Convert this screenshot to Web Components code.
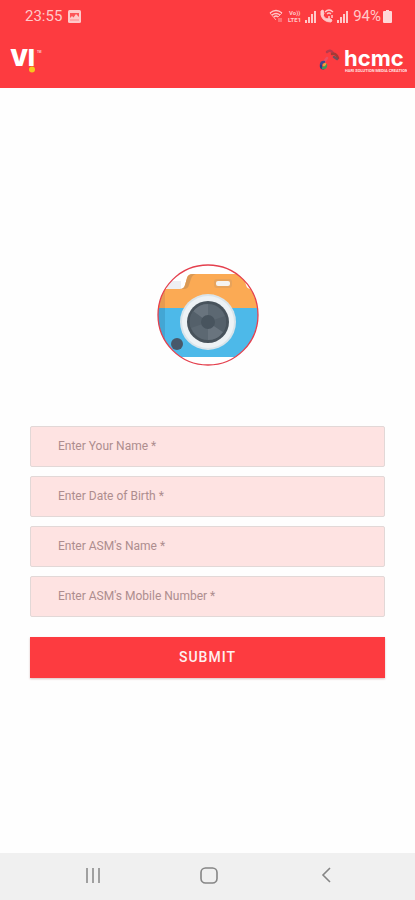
<!DOCTYPE html>
<html lang="en">
<head>
<meta charset="utf-8">
<meta name="viewport" content="width=device-width, initial-scale=1">
<title>Registration</title>
<style>
  html, body { height: 100%; margin: 0; }
  body { font-family: Roboto, "Liberation Sans", sans-serif; background: #fefefe; }
</style>
</head>
<body>
<profile-screen></profile-screen>
<script>
const define = (name, html, setup) => customElements.define(name, class extends HTMLElement {
  connectedCallback() {
    if (this.shadowRoot) return;
    const t = document.createElement('template');
    t.innerHTML = html;
    this.attachShadow({ mode: 'open' }).append(t.content.cloneNode(true));
    if (setup) setup(this, this.shadowRoot);
  }
});

define('status-bar', `
<style>
  :host { display: flex; align-items: center; justify-content: space-between; height: 32px; padding: 0 23px 0 25px; color: #ffc9c9; font-size: 15px; line-height: 16px; }
  div { display: flex; align-items: center; }
  .left { gap: 6px; }
  .right { gap: 2px; }
  .right span { padding-left: 2px; }
  svg { display: block; }
</style>
<div class="left"><span>23:55</span>
  <svg width="13" height="13" viewBox="0 0 13 13" aria-hidden="true"><rect width="13" height="13" rx="1.5" fill="#ffc9c9"/><path d="M2 3h9v4L8 4 5.500 7.500 4 6 2 8z" fill="#fd5558"/><path d="M2 10h9" stroke="#ff8a8c"/></svg>
</div>
<div class="right">
  <svg width="16" height="14" viewBox="0 0 16 14" fill="none" stroke="#ffc9c9" aria-hidden="true"><path d="M1 4Q7 -1 13 4M3 6Q7 3 11 6M5 8Q7 6 9 8" stroke-width="1.300"/><path d="M1 4l6 7M13 4L9 8" stroke-width=".8"/><path d="M10 9v4M12 13V9" stroke-width="1.200" opacity=".6"/></svg>
  <svg width="16" height="16" viewBox="0 0 16 16" fill="#ffc9c9" font-family="Roboto, sans-serif" font-weight="700" font-size="6"><text x="2" y="7">Vo))</text><text x="1" y="14">LTE1</text></svg>
  <svg width="12" height="13" viewBox="0 0 12 13" fill="#ffc9c9" aria-hidden="true"><path d="M0 10h2v3H0zM3 7h2v6H3zM6 4h2v9H6zM9 1h2v12H9z"/></svg>
  <svg width="16" height="14" viewBox="0 0 16 14" fill="none" stroke="#ffc9c9" aria-hidden="true"><path d="M2 2l2-1 1 4-1 1q1 3 4 4l2-1 3 2-1 2Q4 13 2 6z" fill="#ffc9c9"/><path d="M6 3Q10 -1 14 3M8 5Q10 3 12 5" stroke-width="1.300"/><path d="M10 7v2M13 6v3" stroke-width="1.500"/></svg>
  <svg width="12" height="13" viewBox="0 0 12 13" fill="#ffc9c9" aria-hidden="true"><path d="M0 10h2v3H0zM3 7h2v6H3zM6 4h2v9H6zM9 1h2v12H9z"/></svg>
  <span>94%</span>
  <svg width="9" height="13" viewBox="0 0 9 13" fill="#ffd8d8" aria-hidden="true"><path d="M3 0h3v1h2q1 0 1 1v10q0 1-1 1H1q-1 0-1-1V2q0-1 1-1h2z"/></svg>
</div>`);

define('vi-logo', `
<style>
  :host { display: block; }
  svg { display: block; }
</style>
<svg width="36" height="40" viewBox="0 0 36 40" fill="#fff" role="img" aria-label="VI">
  <text x="0" y="26" font-family="Inter, sans-serif" font-weight="900" font-size="23">V</text>
  <text x="18" y="26" font-family="Inter, sans-serif" font-weight="900" font-size="23">I</text>
  <text x="27" y="13" font-family="Roboto, sans-serif" font-size="3">TM</text>
  <circle cx="22" cy="29.500" r="3.500" fill="#fd3b40"/>
  <circle cx="22" cy="29.500" r="3" fill="#f7c51e"/>
</svg>`);

define('hcmc-logo', `
<style>
  :host { display: block; }
  svg { display: block; }
</style>
<svg width="88" height="40" viewBox="0 0 88 40" role="img" aria-label="hcmc">
  <g transform="translate(0 8)" fill="none" stroke-width="2.500" stroke-linecap="round">
    <path d="M8 4q3-3 6 1" stroke="#b83a4c"/><path d="M13 6q4-1 6 4" stroke="#a53a35"/>
    <path d="M15 9l3 2" stroke="#70515b"/><path d="M8 10L5 14" stroke="#e94f66"/>
    <path d="M5 14q-3 0-3 3" stroke="#40468e"/><path d="M2 18q0 3 3 2" stroke="#253f87"/>
    <path d="M4 20q3 0 3-3" stroke="#3f9a58"/><path d="M5 17l1-1" stroke="#e9a13b"/>
  </g>
  <text x="25" y="26" fill="#fff" font-family="Inter, sans-serif" font-weight="700" font-size="22">hcmc</text>
  <text x="26" y="32" fill="#ffe2e2" font-family="Roboto, sans-serif" font-weight="700" font-size="4">HARI SOLUTION MEDIA CREATION</text>
</svg>`);

define('app-bar', `
<style>
  :host { display: flex; align-items: center; justify-content: space-between; height: 56px; padding: 0 8px 0 10px; box-sizing: border-box; }
</style>
<slot></slot>`);

define('photo-picker', `
<style>
  :host { display: block; }
  button { display: block; width: 102px; height: 102px; padding: 0; border: 0; border-radius: 50%; background: none; cursor: pointer; }
  svg { display: block; }
</style>
<button type="button" aria-label="Add photo">
<svg width="102" height="102" viewBox="0 0 102 102" aria-hidden="true">
  <defs><clipPath id="c"><circle cx="51" cy="51" r="50"/></clipPath></defs>
  <circle cx="51" cy="51" r="50" fill="#fff"/>
  <g clip-path="url(#c)">
    <path d="M10 17h14v10H10z" fill="#eeeff2"/>
    <path d="M0 45V25h23q4 0 5-4l2-7q1-4 6-4h45q5 0 6 4l2 7q1 4 5 4h8v20z" fill="#fbaa54"/>
    <path d="M0 45V25h8v20z" fill="#e79b50"/>
    <path d="M23 25q4 0 5-4l2-7q1-4 6-4h3q-4 1-5 5l-2 6q-1 4-5 4z" fill="#d99955"/>
    <path d="M0 44h102v49H0z" fill="#4db9e9"/>
    <path d="M0 44h8v49H0z" fill="#43a6d4"/>
    <rect x="57" y="15" width="18" height="9" rx="3" fill="#e8a35b"/>
    <rect x="59" y="17" width="14" height="5" rx="2" fill="#f5f3f1"/>
    <circle cx="51" cy="58" r="28" fill="#d9e4ea"/>
    <circle cx="51" cy="58" r="26" fill="#edf2f5"/>
    <circle cx="51" cy="58" r="21" fill="#48535c"/>
    <circle cx="51" cy="58" r="18" fill="#5c6872"/>
    <path d="M51 58L36 48A18 18 0 0 1 51 40zM51 58l15 10a18 18 0 0 1-15 8z" fill="#69747e"/>
    <path d="M51 58l17-6a18 18 0 0 1-2 16zM51 58l-17 6a18 18 0 0 1 2-17z" fill="#54606a"/>
    <circle cx="51" cy="58" r="7" fill="#48545e"/>
    <circle cx="20" cy="80" r="6" fill="#47586a"/>
  </g>
  <circle cx="51" cy="51" r="50" fill="none" stroke="#e4404e" stroke-width="1.300"/>
</svg>
</button>`);

define('text-field', `
<style>
  :host { display: block; }
  input { display: block; box-sizing: border-box; width: 100%; height: 41px; margin: 0; padding: 0 27px; border: 1px solid #e2d8d7; border-radius: 2px; background: #fee3e2; color: #5c4747; font: 12px/16px Roboto, "Liberation Sans", sans-serif; outline: 0; }
  input:focus { border-color: #fd3b40; }
  input::placeholder { color: #ad8d8e; opacity: 1; }
</style>
<input>`, (host, root) => {
  const input = root.querySelector('input');
  const label = host.getAttribute('label');
  input.type = host.getAttribute('type') || 'text';
  input.placeholder = label;
  input.setAttribute('aria-label', label);
});

define('submit-button', `
<style>
  :host { display: block; }
  button { display: block; width: 100%; height: 41px; padding: 0; border: 0; background: #fd3b40; color: #fff0f0; font: 500 14px/16px Roboto, "Liberation Sans", sans-serif; letter-spacing: 1px; box-shadow: 0 1px 2px #d9c0c0; cursor: pointer; }
</style>
<button type="submit"><slot></slot></button>`);

define('system-nav', `
<style>
  :host { display: grid; grid-template-columns: 1fr 1fr 1fr; align-items: start; box-sizing: border-box; height: 47px; padding: 2px 31px 0 35px; background: #f0f0f0; }
  button { display: flex; align-items: center; justify-content: center; height: 40px; padding: 0; border: 0; background: none; }
</style>
<button type="button" aria-label="Recent apps"><svg width="18" height="18" viewBox="0 0 18 18" fill="none" stroke="#858585" stroke-width="1.500"><path d="M3 2v15M9 2v15M15 2v15"/></svg></button>
<button type="button" aria-label="Home"><svg width="20" height="20" viewBox="0 0 20 20" fill="none" stroke="#858585" stroke-width="1.600"><rect x="2" y="3" width="16" height="15" rx="4.500"/></svg></button>
<button type="button" aria-label="Back"><svg width="18" height="18" viewBox="0 0 18 18" fill="none" stroke="#858585" stroke-width="1.600"><path d="M13 2L6 9l7 7"/></svg></button>`);

define('profile-screen', `
<style>
  :host { display: flex; flex-direction: column; min-height: 100%; }
  header { background: #fd3b40; }
  main { flex: 1; display: flex; flex-direction: column; align-items: center; justify-content: center; gap: 60px; padding: 0 30px; }
  form { display: flex; flex-direction: column; gap: 20px; width: 100%; }
  .fields { display: grid; gap: 9px; }
</style>
<header>
  <status-bar></status-bar>
  <app-bar><vi-logo></vi-logo><hcmc-logo></hcmc-logo></app-bar>
</header>
<main>
  <photo-picker></photo-picker>
  <form onsubmit="return false">
    <div class="fields">
      <text-field label="Enter Your Name *"></text-field>
      <text-field label="Enter Date of Birth *"></text-field>
      <text-field label="Enter ASM's Name *"></text-field>
      <text-field label="Enter ASM's Mobile Number *" type="tel"></text-field>
    </div>
    <submit-button>SUBMIT</submit-button>
  </form>
</main>
<system-nav></system-nav>`);
</script>
</body>
</html>
